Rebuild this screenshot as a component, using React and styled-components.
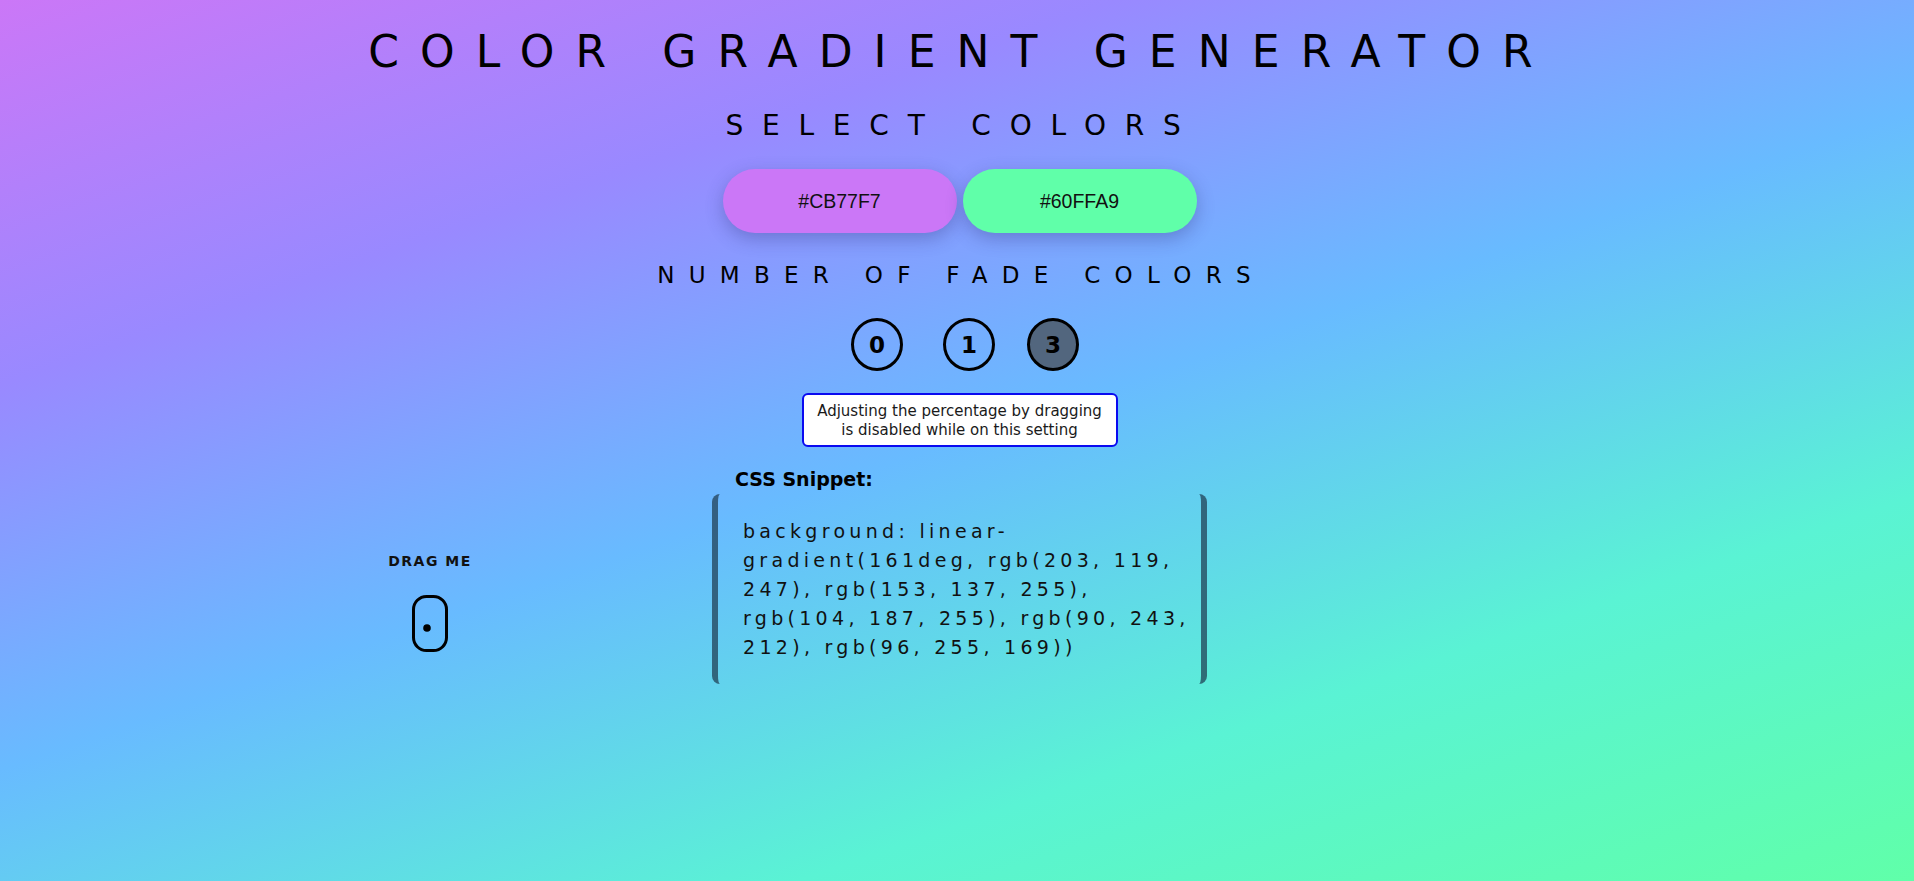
import styled, { createGlobalStyle } from "styled-components";

const GlobalStyle = createGlobalStyle`
  html, body {
    margin: 0;
    padding: 0;
  }
  body {
    font-family: "DejaVu Sans", "Noto Sans", sans-serif;
    color: #000;
  }
`;

const colors = ["#CB77F7", "#60FFA9"];
const stops = [
  "rgb(203, 119, 247)",
  "rgb(153, 137, 255)",
  "rgb(104, 187, 255)",
  "rgb(90, 243, 212)",
  "rgb(96, 255, 169)",
];
const gradient = `linear-gradient(161deg, ${stops.join(", ")})`;

const Page = styled.main`
  min-height: 100vh;
  background: ${gradient};
  display: flex;
  flex-direction: column;
  align-items: center;
  box-sizing: border-box;
  padding-top: 30px;
`;

const Title = styled.h1`
  margin: 0;
  font-size: 44px;
  line-height: 44px;
  font-weight: 400;
  letter-spacing: 21.1px;
  text-indent: 8px;
  text-align: center;
`;

// section headings, spaced out
const Heading = styled.h2`
  margin: ${(p) => p.$top}px 0 0;
  font-size: ${(p) => p.$size}px;
  line-height: ${(p) => p.$size}px;
  font-weight: 400;
  letter-spacing: ${(p) => p.$spacing}px;
  text-indent: ${(p) => p.$indent}px;
  text-align: center;
`;

const Swatches = styled.div`
  display: flex;
  gap: 6px;
  margin-top: 29px;
  padding-left: 5px;
`;

const Swatch = styled.button`
  width: 234px;
  height: 64px;
  border: none;
  border-radius: 32px;
  background: ${(p) => p.$color};
  box-shadow: 0 6px 18px rgba(40, 40, 110, 0.3);
  font-family: "Liberation Sans", Arial, sans-serif;
  font-size: 19.5px;
  color: #111;
  cursor: pointer;
`;

const Fades = styled.div`
  display: flex;
  margin-top: 31px;
  padding-left: 16px;
`;

const Fade = styled.button`
  width: 52px;
  height: 53px;
  margin-left: ${(p) => p.$gap}px;
  box-sizing: border-box;
  border: 3px solid #000;
  border-radius: 50%;
  background: ${(p) => (p.$active ? "#52667e" : "transparent")};
  font-family: "DejaVu Sans", sans-serif;
  font-weight: 700;
  font-size: 23px;
  color: #000;
  padding: 0;
  cursor: pointer;
`;

const Notice = styled.div`
  width: 316px;
  box-sizing: border-box;
  margin: 22px 0 0 5px;
  padding: 7px 8px 6px;
  background: #fff;
  border: 2px solid #0a0af0;
  border-radius: 6px;
  font-size: 15px;
  line-height: 18.5px;
  text-align: center;
  color: #1a1a1a;
`;

const Workspace = styled.section`
  width: 100%;
  box-sizing: border-box;
  padding-left: 5px;
  margin-top: 23px;
  display: grid;
  grid-template-columns: 1fr 495px 1fr;
  align-items: start;
`;

const DragArea = styled.div`
  display: flex;
  justify-content: flex-end;
  padding-right: 222px;
  padding-top: 84px;
`;

const DragHandle = styled.div`
  width: 120px;
  display: flex;
  flex-direction: column;
  align-items: center;
  gap: 27px;
  cursor: grab;
`;

const DragLabel = styled.span`
  font-size: 14px;
  line-height: 14px;
  font-weight: 700;
  letter-spacing: 1.5px;
  color: #111;
`;

const SnippetColumn = styled.div`
  display: flex;
  flex-direction: column;
`;

const SnippetLabel = styled.h3`
  margin: 0 0 5px 23px;
  font-size: 19px;
  line-height: 19px;
  font-weight: 700;
`;

const SnippetBox = styled.pre`
  margin: 0;
  height: 190px;
  box-sizing: border-box;
  padding: 23px 6px 22px 25px;
  border-left: 6px solid rgba(30, 60, 80, 0.72);
  border-right: 6px solid rgba(30, 60, 80, 0.72);
  border-radius: 8px;
  font-family: "DejaVu Sans", sans-serif;
  font-size: 19px;
  line-height: 29px;
  letter-spacing: 4.3px;
  white-space: normal;
  color: #111;
`;

const MouseIcon = () => (
  <svg width="36" height="57" viewBox="0 0 36 57" fill="none">
    <rect x="1.5" y="1.5" width="33" height="54" rx="13" stroke="#000" strokeWidth="3" />
    <circle cx="15" cy="33" r="3.8" fill="#000" />
  </svg>
);

const App = () => {
  const fades = [
    { n: 0, gap: 0 },
    { n: 1, gap: 40 },
    { n: 3, gap: 32, active: true },
  ];

  return (
    <Page>
      <GlobalStyle />
      <Title>COLOR GRADIENT GENERATOR</Title>
      <Heading $top={38} $size={28} $spacing={18.8} $indent={11}>
        SELECT COLORS
      </Heading>
      <Swatches>
        {colors.map((c) => (
          <Swatch key={c} $color={c}>
            {c}
          </Swatch>
        ))}
      </Swatches>
      <Heading $top={31} $size={23} $spacing={14.3} $indent={8}>
        NUMBER OF FADE COLORS
      </Heading>
      <Fades>
        {fades.map((f) => (
          <Fade key={f.n} $gap={f.gap} $active={f.active}>
            {f.n}
          </Fade>
        ))}
      </Fades>
      <Notice>
        Adjusting the percentage by dragging is disabled while on this setting
      </Notice>
      <Workspace>
        <DragArea>
          <DragHandle>
            <DragLabel>DRAG ME</DragLabel>
            <MouseIcon />
          </DragHandle>
        </DragArea>
        <SnippetColumn>
          <SnippetLabel>CSS Snippet:</SnippetLabel>
          <SnippetBox>{`background: ${gradient}`}</SnippetBox>
        </SnippetColumn>
        <div />
      </Workspace>
    </Page>
  );
};

export default App;
